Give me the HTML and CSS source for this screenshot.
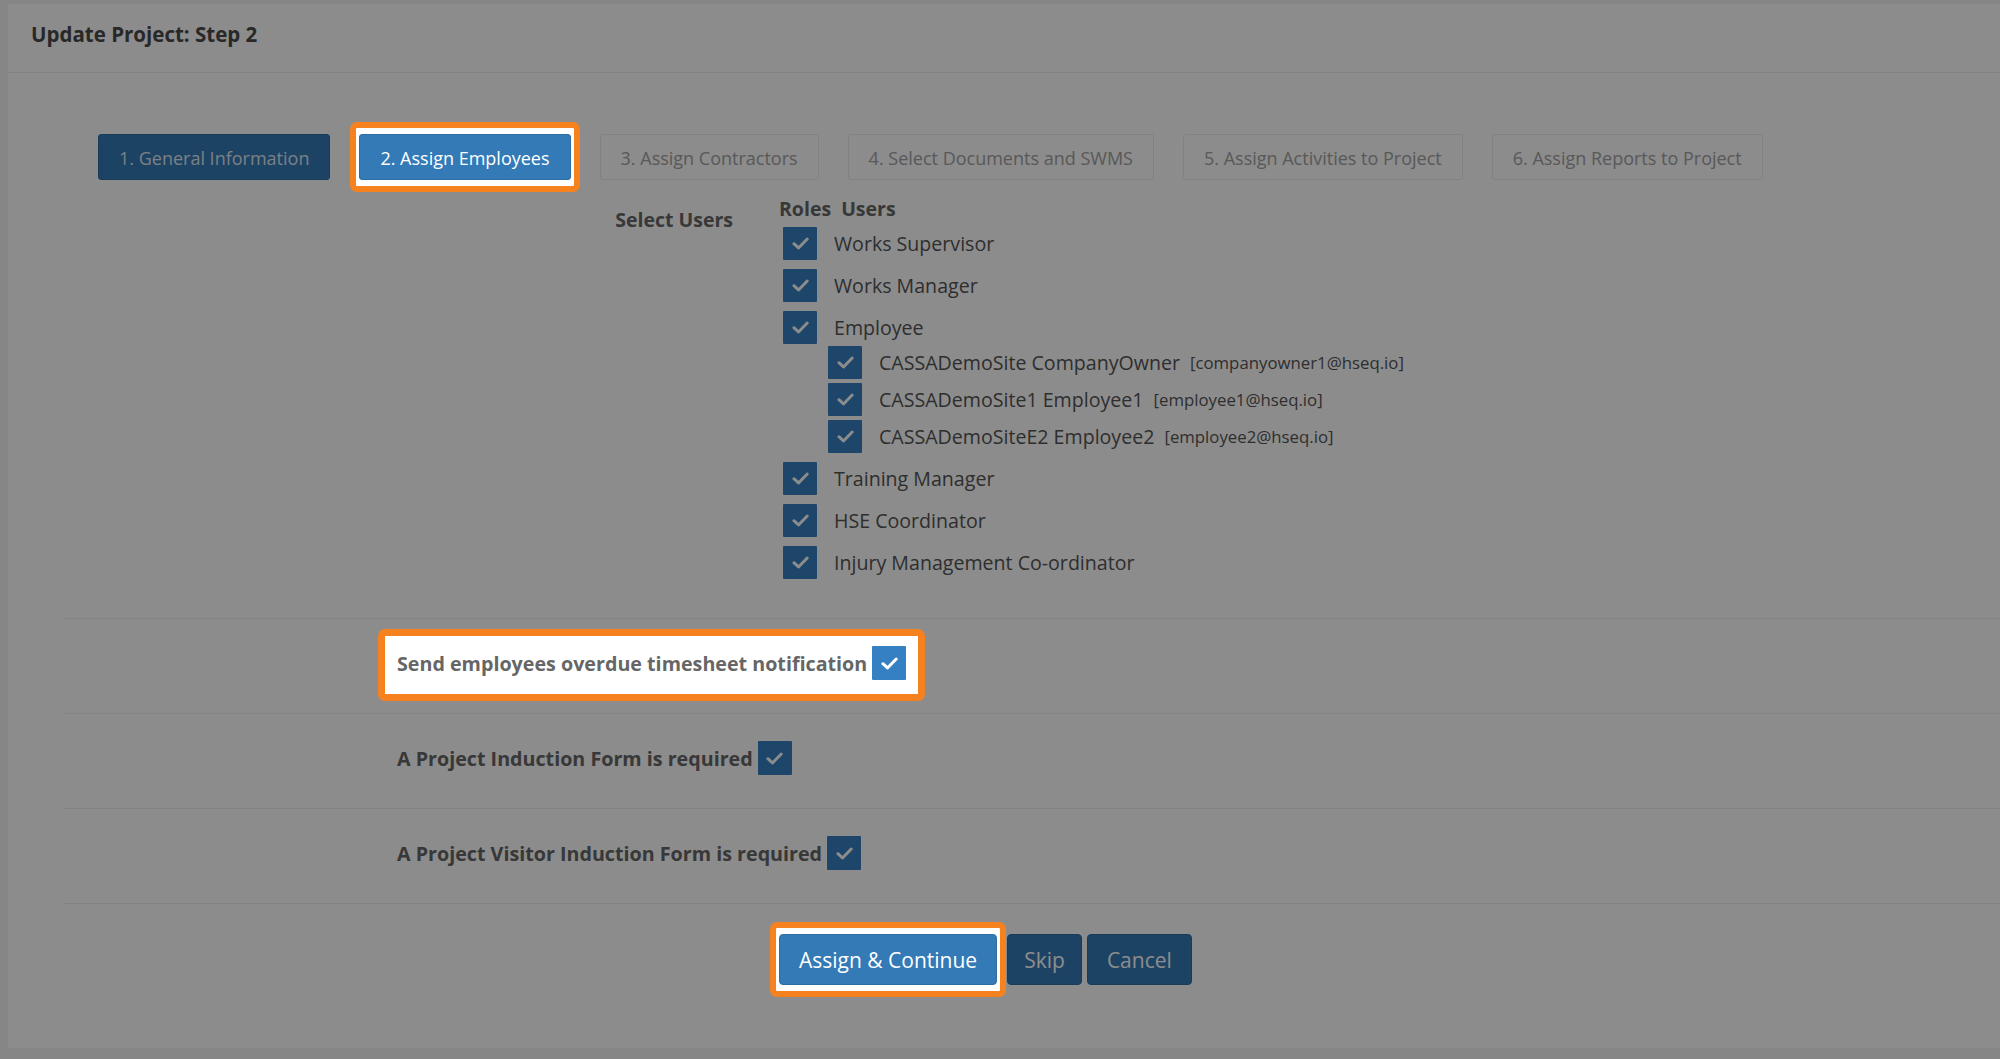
FILE: index.html
```html
<!DOCTYPE html>
<html lang="en">
<head>
  <meta charset="UTF-8">
  <title>Update Project: Step 2</title>
  <link rel="stylesheet" href="styles.css">
</head>
<body>
  <div class="panel">
    <div class="panel-heading">
      <h3 class="panel-title">Update Project: Step 2</h3>
    </div>
    <div class="panel-body">
      <div class="wizard-steps">
        <a class="step done">1. General Information</a>
        <span class="tour-hl"><a class="step active">2. Assign Employees</a></span>
        <a class="step">3. Assign Contractors</a>
        <a class="step">4. Select Documents and SWMS</a>
        <a class="step">5. Assign Activities to Project</a>
        <a class="step">6. Assign Reports to Project</a>
      </div>

      <div class="users-group">
        <label class="control-label">Select Users</label>
        <div class="users-col">
          <div class="roles-head"><span>Roles</span><span>Users</span></div>
          <ul class="role-list">
            <li><div class="item"><span class="check"><svg viewBox="0 0 16 12"><path d="M1.8 6.2l4.3 4 8.2-8.4"/></svg></span>Works Supervisor</div></li>
            <li><div class="item"><span class="check"><svg viewBox="0 0 16 12"><path d="M1.8 6.2l4.3 4 8.2-8.4"/></svg></span>Works Manager</div></li>
            <li>
              <div class="item"><span class="check"><svg viewBox="0 0 16 12"><path d="M1.8 6.2l4.3 4 8.2-8.4"/></svg></span>Employee</div>
              <ul class="user-list">
                <li class="item"><span class="check"><svg viewBox="0 0 16 12"><path d="M1.8 6.2l4.3 4 8.2-8.4"/></svg></span>CASSADemoSite CompanyOwner<span class="email">[companyowner1@hseq.io]</span></li>
                <li class="item"><span class="check"><svg viewBox="0 0 16 12"><path d="M1.8 6.2l4.3 4 8.2-8.4"/></svg></span>CASSADemoSite1 Employee1<span class="email">[employee1@hseq.io]</span></li>
                <li class="item"><span class="check"><svg viewBox="0 0 16 12"><path d="M1.8 6.2l4.3 4 8.2-8.4"/></svg></span>CASSADemoSiteE2 Employee2<span class="email">[employee2@hseq.io]</span></li>
              </ul>
            </li>
            <li><div class="item"><span class="check"><svg viewBox="0 0 16 12"><path d="M1.8 6.2l4.3 4 8.2-8.4"/></svg></span>Training Manager</div></li>
            <li><div class="item"><span class="check"><svg viewBox="0 0 16 12"><path d="M1.8 6.2l4.3 4 8.2-8.4"/></svg></span>HSE Coordinator</div></li>
            <li><div class="item"><span class="check"><svg viewBox="0 0 16 12"><path d="M1.8 6.2l4.3 4 8.2-8.4"/></svg></span>Injury Management Co-ordinator</div></li>
          </ul>
        </div>
      </div>

      <div class="options">
        <div class="option-row">
          <span class="tour-hl tour-hl-wide">
            <label>Send employees overdue timesheet notification</label>
            <span class="check"><svg viewBox="0 0 16 12"><path d="M1.8 6.2l4.3 4 8.2-8.4"/></svg></span>
          </span>
        </div>
        <div class="option-row">
          <label>A Project Induction Form is required</label>
          <span class="check"><svg viewBox="0 0 16 12"><path d="M1.8 6.2l4.3 4 8.2-8.4"/></svg></span>
        </div>
        <div class="option-row">
          <label>A Project Visitor Induction Form is required</label>
          <span class="check"><svg viewBox="0 0 16 12"><path d="M1.8 6.2l4.3 4 8.2-8.4"/></svg></span>
        </div>
      </div>

      <div class="form-actions">
        <span class="tour-hl"><button class="btn">Assign &amp; Continue</button></span>
        <button class="btn skip">Skip</button>
        <button class="btn">Cancel</button>
      </div>
    </div>
  </div>
  <div class="tour-overlay"></div>
</body>
</html>
```

FILE: styles.css
```css
body {
  margin: 0;
  background-color: #f5f5f5;
  font-family: 'Open Sans', 'Liberation Sans', sans-serif;
  color: #666;
}
.panel {
  margin: 4px 0 11px 8px;
  height: 1044px;
  background: #fff;
}
.panel-heading {
  height: 69px;
  padding: 0 23px 8px;
  box-sizing: border-box;
  display: flex;
  align-items: center;
  border-bottom: 1px solid #eee;
}
.panel-title {
  margin: 0;
  font-size: 20.5px;
  font-weight: 700;
  color: #4a4a4a;
}
.panel-body {
  padding-top: 61px;
}

/* wizard tabs */
.wizard-steps {
  display: flex;
  gap: 29px;
  margin-left: 90px;
}
.step {
  display: block;
  height: 46px;
  line-height: 46px;
  padding: 0 20px;
  box-sizing: border-box;
  font-size: 18px;
  color: #a2a2a2;
  border: 1px solid #ececec;
  border-radius: 3px;
  white-space: nowrap;
}
.step.done {
  background-color: #337ab7;
  border-color: #2e6da4;
  color: rgba(255, 255, 255, 0.85);
}
.step.active {
  background-color: #337ab7;
  border-color: #2e6da4;
  color: #fff;
}

/* users */
.users-group {
  display: flex;
  margin-top: 16px;
}
.control-label {
  width: 771px;
  box-sizing: border-box;
  padding: 11px 46px 0 0;
  text-align: right;
  font-size: 19.5px;
  font-weight: 700;
  line-height: 26px;
}
.roles-head {
  display: flex;
  gap: 10px;
  font-size: 19.5px;
  font-weight: 700;
  line-height: 26px;
}
.role-list,
.user-list {
  list-style: none;
  margin: 0;
  padding: 0;
}
.role-list {
  margin-top: 5px;
  padding-left: 4px;
}
.role-list > li + li {
  margin-top: 9px;
}
.user-list {
  margin-top: 2px;
  padding-left: 45px;
}
.user-list > li + li {
  margin-top: 4px;
}
.item {
  display: flex;
  align-items: center;
  height: 33px;
  font-size: 19.6px;
  color: #555;
  white-space: nowrap;
}
.item .check {
  margin-right: 17px;
}
.email {
  margin-left: 10px;
  font-size: 16.8px;
}
.check {
  width: 34px;
  height: 33px;
  flex-shrink: 0;
  background-color: #3580c2;
  border-radius: 1px;
  display: inline-flex;
  justify-content: center;
  align-items: center;
}
.check svg {
  width: 17px;
  height: 13px;
  fill: none;
  stroke: #fff;
  stroke-width: 2.8;
  stroke-linecap: round;
  stroke-linejoin: round;
}

/* option rows */
.options {
  margin: 39px 0 0 55px;
  border-bottom: 1px solid #eee;
}
.option-row {
  display: flex;
  align-items: center;
  height: 95px;
  padding: 0 0 6px 334px;
  box-sizing: border-box;
  border-top: 1px solid #eee;
}
.option-row label {
  font-size: 19.7px;
  font-weight: 700;
}
.option-row .check {
  margin-left: 5px;
  width: 34px;
  height: 34px;
}
.option-row .tour-hl {
  display: inline-flex;
  align-items: center;
}

/* actions */
.form-actions {
  display: flex;
  margin: 30px 0 0 771px;
}
.btn {
  height: 51px;
  padding: 0 19px;
  font-family: inherit;
  font-size: 21px;
  color: #fff;
  background-color: #337ab7;
  border: 1px solid #2e6da4;
  border-radius: 4px;
  cursor: pointer;
}
.form-actions .tour-hl {
  margin-right: 10px;
}
.btn.skip {
  margin-right: 5px;
  padding: 0 16px;
}

/* guided tour highlight */
.tour-overlay {
  position: fixed;
  top: 0;
  left: 0;
  right: 0;
  bottom: 0;
  background: rgba(0, 0, 0, 0.45);
  z-index: 10;
}
.tour-hl {
  position: relative;
  z-index: 20;
  display: inline-flex;
}
.tour-hl::before {
  content: '';
  position: absolute;
  top: -12px;
  bottom: -12px;
  left: -9px;
  right: -9px;
  background: #fff;
  border: 6px solid #f5821f;
  border-radius: 7px;
  z-index: -1;
}
.tour-hl-wide::before {
  top: -17px;
  bottom: -21px;
  left: -19px;
  right: -19px;
  border-width: 7px;
}
```
